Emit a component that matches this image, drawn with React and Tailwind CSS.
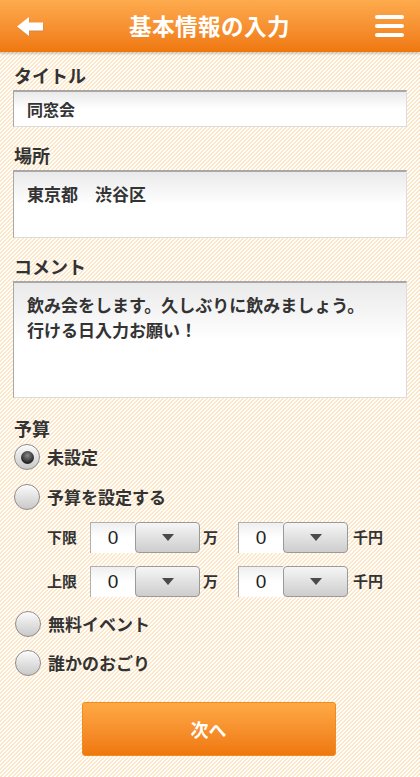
import React, { useState } from "react";

const TextBox = ({ className = "", children }) => (
  <div
    className={`border-t-2 border-l border-t-[#a8a8a8] border-l-[#a8a8a8] border-r border-b border-r-[#dcdcdc] border-b-[#dcdcdc] bg-linear-to-b from-[#eaeaea] via-[#ffffff] to-[#ffffff] px-[13px] font-bold ${className}`}
  >
    {children}
  </div>
);

const Label = ({ children, className = "" }) => (
  <div className={`h-[24px] leading-[24px] text-[18px] font-bold text-[#333] pl-[1px] ${className}`}>
    {children}
  </div>
);

const Radio = ({ checked, label, onClick, className = "" }) => (
  <div className={`flex items-center h-[34px] cursor-pointer ${className}`} onClick={onClick}>
    <div className="w-[26px] h-[26px] rounded-full border border-[#8c8c8c] bg-linear-to-b from-[#fbfbfb] to-[#c9c9c9] flex items-center justify-center shadow-[inset_0_1px_0_#fff]">
      {checked && (
        <div className="w-[13px] h-[13px] rounded-full bg-[radial-gradient(circle_at_50%_35%,#8a8a8a,#222_70%)]" />
      )}
    </div>
    <span className="ml-[7px] text-[17px] font-bold text-[#333]">{label}</span>
  </div>
);

const Amount = () => (
  <div className="flex h-[31px]">
    <div className="w-[45px] h-full border-t border-l border-[#b0b0b0] bg-linear-to-b from-[#efefef] to-[#ffffff] to-50% flex items-center justify-center text-[19px] font-['Liberation_Sans',sans-serif] text-[#222]">
      0
    </div>
    <div className="w-[65px] h-full rounded-[4px] border border-[#9a9a9a] bg-linear-to-b from-[#f6f6f6] to-[#cdcdcd] flex items-center justify-center">
      <svg width="12" height="7" viewBox="0 0 12 7">
        <path d="M0 0 L12 0 L6 7 Z" fill="#4a4a4a" />
      </svg>
    </div>
  </div>
);

const BudgetRow = ({ label, className = "" }) => (
  <div className={`flex items-center pl-[34px] ${className}`}>
    <span className="w-[43px] text-[15px] font-bold">{label}</span>
    <Amount />
    <span className="ml-[3px] w-[35px] text-[15px] font-bold">万</span>
    <Amount />
    <span className="ml-[5px] text-[15px] font-bold">千円</span>
  </div>
);

export default function App() {
  const [budget, setBudget] = useState("none");

  return (
    <div className="min-h-screen w-full bg-white bg-[linear-gradient(135deg,#fde7c6_25%,transparent_25%,transparent_50%,#fde7c6_50%,#fde7c6_75%,transparent_75%)] bg-[length:4px_4px] font-['Noto_Sans_CJK_JP',sans-serif] text-[#333]">
      <header className="h-[52px] flex items-center justify-between pl-[17px] pr-[16px] bg-linear-to-b from-[#fdab4d] to-[#ef780b] shadow-[0_2px_2px_rgba(0,0,0,0.18)]">
        <svg width="27" height="19" viewBox="0 0 27 19">
          <path d="M0 9.5 L12 0 L12 5.5 L26 5.5 L26 13.5 L12 13.5 L12 19 Z" fill="#c98a4a" transform="translate(0.5,1)" />
          <path d="M0 9.5 L12 0 L12 5.5 L26 5.5 L26 13.5 L12 13.5 L12 19 Z" fill="#ffffff" />
        </svg>
        <h1 className="text-[22.5px] font-bold text-white tracking-[0.5px]">基本情報の入力</h1>
        <svg width="29" height="24" viewBox="0 0 29 24">
          <rect x="0" y="1" width="29" height="4" rx="2" fill="#ffffff" />
          <rect x="0" y="10" width="29" height="4" rx="2" fill="#ffffff" />
          <rect x="0" y="19" width="29" height="4" rx="2" fill="#ffffff" />
        </svg>
      </header>

      <main className="px-[13px] pb-[20px]">
        <Label className="mt-[11px]">タイトル</Label>
        <TextBox className="mt-[3px] h-[37px] flex items-center text-[16px]">同窓会</TextBox>

        <Label className="mt-[16px]">場所</Label>
        <TextBox className="mt-[3px] h-[68px] pt-[10px] leading-[24px] text-[17px]">東京都　渋谷区</TextBox>

        <Label className="mt-[16px]">コメント</Label>
        <TextBox className="mt-[3px] h-[117px] pt-[9px] leading-[25px] text-[17px]">
          飲み会をします。久しぶりに飲みましょう。
          <br />
          行ける日入力お願い！
        </TextBox>

        <Label className="mt-[18px]">予算</Label>
        <div className="pl-[1px]">
          <Radio checked={budget === "none"} label="未設定" onClick={() => setBudget("none")} />
          <Radio
            checked={budget === "set"}
            label="予算を設定する"
            onClick={() => setBudget("set")}
            className="mt-[6px]"
          />
        </div>

        <BudgetRow label="下限" className="mt-[8px]" />
        <BudgetRow label="上限" className="mt-[13px]" />

        <div className="pl-[2px]">
          <Radio
            checked={budget === "free"}
            label="無料イベント"
            onClick={() => setBudget("free")}
            className="mt-[10px]"
          />
          <Radio
            checked={budget === "treat"}
            label="誰かのおごり"
            onClick={() => setBudget("treat")}
            className="mt-[5px]"
          />
        </div>

        <div className="flex justify-center mt-[22px] pr-[3px]">
          <button className="w-[254px] h-[54px] rounded-[3px] border border-[#f08b1f] bg-linear-to-b from-[#fea944] to-[#ef780a] text-white text-[18px] font-bold">
            次へ
          </button>
        </div>
      </main>
    </div>
  );
}
